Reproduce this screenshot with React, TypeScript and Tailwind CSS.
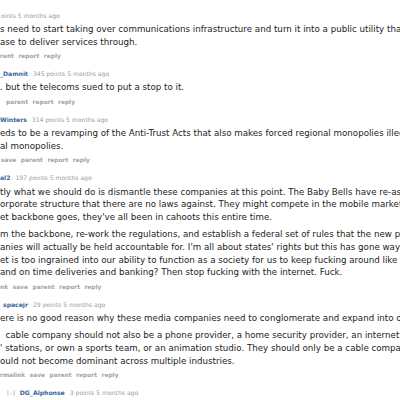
const font = { fontFamily: '"DejaVu Sans", Verdana, sans-serif' };

type Comment = {
  author?: string;
  authorX?: number;
  meta: string;
  paragraphs: string[][];
  buttons: string[];
  buttonsX?: number;
};

const comments: Comment[] = [
  {
    meta: "oints 5 months ago",
    authorX: 1,
    paragraphs: [
      [
        "s need to start taking over communications infrastructure and turn it into a public utility that",
        "ase to deliver services through.",
      ],
    ],
    buttons: ["rent", "report", "reply"],
  },
  {
    author: "_Damnit",
    meta: "345 points 5 months ago",
    paragraphs: [[". but the telecoms sued to put a stop to it."]],
    buttons: ["parent", "report", "reply"],
    buttonsX: 6,
  },
  {
    author: "Winters",
    meta: "314 points 5 months ago",
    paragraphs: [
      [
        "eds to be a revamping of the Anti-Trust Acts that also makes forced regional monopolies illegal",
        "al monopolies.",
      ],
    ],
    buttons: ["save", "parent", "report", "reply"],
    buttonsX: 1,
  },
  {
    author: "al2",
    meta: "197 points 5 months ago",
    paragraphs: [
      [
        "tly what we should do is dismantle these companies at this point. The Baby Bells have re-assembled",
        "orporate structure that there are no laws against. They might compete in the mobile market",
        "et backbone goes, they've all been in cahoots this entire time.",
      ],
      [
        "m the backbone, re-work the regulations, and establish a federal set of rules that the new providers",
        "anies will actually be held accountable for. I'm all about states' rights but this has gone way",
        "et is too ingrained into our ability to function as a society for us to keep fucking around like",
        "and on time deliveries and banking? Then stop fucking with the internet. Fuck.",
      ],
    ],
    buttons: ["nk", "save", "parent", "report", "reply"],
  },
  {
    author: "spacejr",
    authorX: 3,
    meta: "29 points 5 months ago",
    paragraphs: [
      [
        "ere is no good reason why these media companies need to conglomerate and expand into other",
      ],
      [
        "  cable company should not also be a phone provider, a home security provider, an internet provider",
        "' stations, or own a sports team, or an animation studio. They should only be a cable company",
        "ould not become dominant across multiple industries.",
      ],
    ],
    buttons: ["rmalink", "save", "parent", "report", "reply"],
  },
];

function Tagline({ c }: { c: Comment }) {
  return (
    <div
      className="flex h-[13px] items-center gap-[5px] whitespace-nowrap text-[6.1px]"
      style={{ paddingLeft: c.authorX ?? 0 }}
    >
      {c.author && (
        <span className="font-bold text-[#336699]">{c.author}</span>
      )}
      <span className="text-[#9a9a9a]">{c.meta}</span>
    </div>
  );
}

export default function App() {
  return (
    <div
      className="h-[400px] w-[400px] overflow-hidden bg-white pt-[9px]"
      style={font}
    >
      {comments.map((c, i) => (
        <div key={i} className={i > 0 ? "mt-[4.5px]" : ""}>
          <Tagline c={c} />
          <div className="mt-[1px] flex flex-col gap-[4.5px]">
            {c.paragraphs.map((p, j) => (
              <div key={j}>
                {p.map((line) => (
                  <div
                    key={line}
                    className="whitespace-pre text-[8.7px] leading-[12.7px] text-[#222]"
                  >
                    {line}
                  </div>
                ))}
              </div>
            ))}
          </div>
          <div
            className="mt-[1.5px] flex h-[13px] items-center gap-[4.5px] whitespace-nowrap text-[5.9px] font-bold text-[#a3a3a3]"
            style={{ paddingLeft: c.buttonsX ?? 0 }}
          >
            {c.buttons.map((b) => (
              <span key={b}>{b}</span>
            ))}
          </div>
        </div>
      ))}

      {/* collapsed child */}
      <div className="mt-[4.5px] flex h-[13px] items-center gap-[5px] whitespace-nowrap pl-[7px] text-[6.1px]">
        <span className="text-[#9a9a9a]">[–]</span>
        <span className="font-bold text-[#336699]">DG_Alphonse</span>
        <span className="text-[#9a9a9a]">3 points 5 months ago</span>
      </div>
    </div>
  );
}
